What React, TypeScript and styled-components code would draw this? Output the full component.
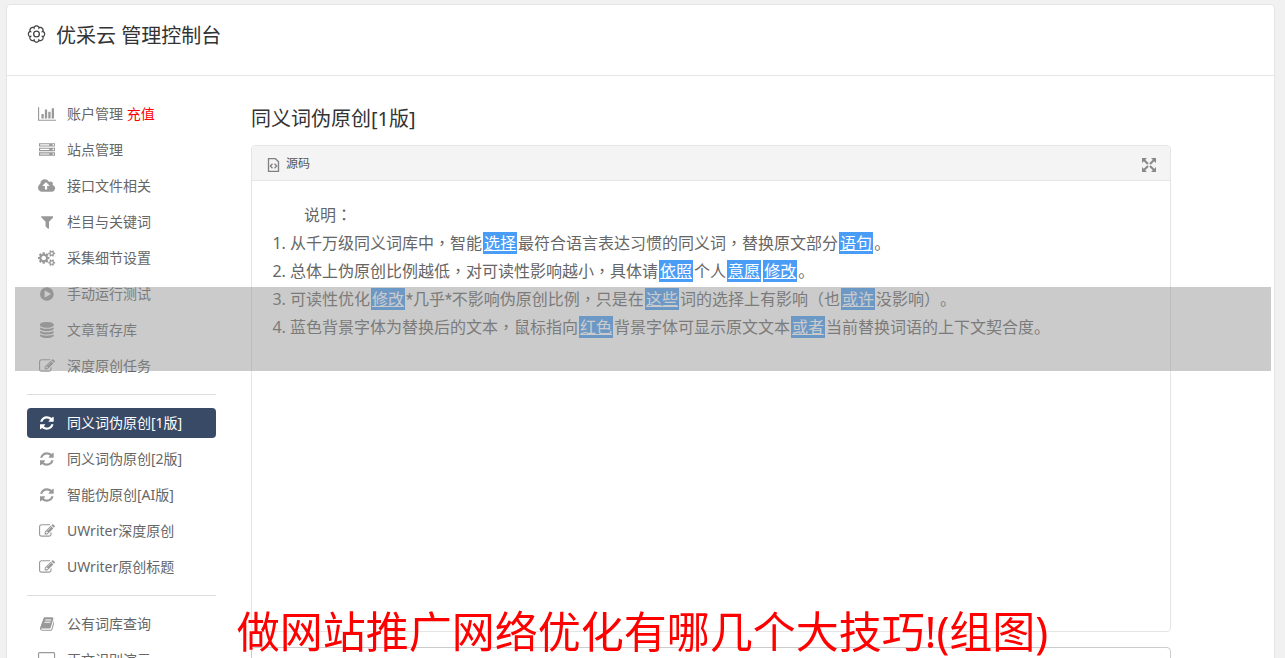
import React from "react";
import styled, { createGlobalStyle } from "styled-components";

const latin = '"Noto Sans", "Noto Sans CJK SC", sans-serif';

const GlobalStyle = createGlobalStyle`
  *, *::before, *::after { box-sizing: border-box; }
  body {
    margin: 0;
    height: 100vh;
    overflow: hidden;
    background: #f1f1f1;
    color: #666;
    font: 14px/20px ${latin};
  }
`;

const Card = styled.div`
  margin: 4px 10px 0 6px;
  min-height: 100vh;
  background: #fff;
  border: 1px solid #e5e5e5;
  border-radius: 4px 4px 0 0;
`;

const TopBar = styled.header`
  display: flex;
  align-items: flex-start;
  gap: 10px;
  height: 71px;
  padding: 16px 20px;
  border-bottom: 1px solid #e5e5e5;
  color: #333;
`;

const GearIcon = styled.svg`
  width: 19px;
  height: 20px;
  margin-top: 3px;
  fill: none;
  stroke: #444;
  stroke-width: 1.4;
`;

const Title = styled.h1`
  margin: 0;
  font-size: 20px;
  line-height: 30px;
  font-weight: 400;
`;

const Columns = styled.div`
  display: flex;
  align-items: flex-start;
  gap: 35px;
  padding: 23px 103px 0 20px;
`;

const Sidebar = styled.nav`
  flex: 0 0 189px;
`;

const Group = styled.ul`
  display: flex;
  flex-direction: column;
  gap: 6px;
  margin: 0;
  padding: 0 0 13px;
  list-style: none;

  & + & {
    padding-top: 13px;
    border-top: 1px solid #ddd;
  }
`;

const ItemLink = styled.a<{ $active?: boolean }>`
  display: flex;
  align-items: center;
  gap: 10px;
  height: 30px;
  padding: 0 10px;
  border-radius: 4px;
  color: ${(p) => (p.$active ? "#fff" : "#666")};
  background: ${(p) => (p.$active ? "#394a66" : "transparent")};
  text-decoration: none;
  white-space: nowrap;
`;

const IconCell = styled.span<{ $active?: boolean }>`
  display: flex;
  justify-content: center;
  flex: 0 0 20px;
  color: ${(p) => (p.$active ? "#fff" : "#999")};

  svg { height: 16px; fill: currentColor; }
`;

const Hot = styled.span`
  color: #f00;
`;

const Main = styled.main`
  flex: 1 1 0;
  min-width: 0;
`;

const Heading = styled.h2`
  margin: 0 0 11px;
  padding-top: 5px;
  color: #333;
  font-size: 20px;
  line-height: 30px;
  font-weight: 400;
`;

const Editor = styled.section`
  min-height: 487px;
  border: 1px solid #e5e5e5;
  border-radius: 4px;
`;

const ToolBar = styled.div`
  display: flex;
  align-items: center;
  justify-content: space-between;
  height: 35px;
  padding: 2px 13px 0 15px;
  background: #f4f4f4;
  border-bottom: 1px solid #e5e5e5;
  border-radius: 4px 4px 0 0;
`;

const ToolButton = styled.button`
  display: flex;
  align-items: center;
  gap: 6px;
  padding: 0;
  border: 0;
  background: none;
  color: #555;
  font: 12px/18px ${latin};

  svg { margin-top: 2px; }
`;

const Content = styled.div`
  padding: 20px;
  font-size: 16px;
  line-height: 28px;
  text-spacing-trim: space-all;
`;

const Intro = styled.p`
  margin: 0;
  text-indent: 32px;
`;

const Rules = styled.ol`
  margin: 0;
  padding: 0 0 0 18px;
  white-space: nowrap;
`;

const Swap = styled.a`
  margin: 0 1px;
  padding: 0 1px;
  background: #4a9df6;
  color: #fff;
  text-decoration: underline;
`;

const Middle = styled.span`
  font-family: "Noto Sans CJK TC", sans-serif;
  line-height: 16px;
`;

const Star = styled.span`
  font-family: Roboto, sans-serif;
  line-height: 16px;
`;

const TextArea = styled.textarea`
  display: block;
  width: 100%;
  height: 80px;
  margin-top: 15px;
  border: 1px solid #ccc;
  border-radius: 4px;
  background: #fff;
  resize: none;
`;

const Band = styled.div`
  position: fixed;
  top: calc(50% - 42px);
  left: 15px;
  right: 14px;
  height: 84px;
  background: rgba(147, 147, 147, 0.48);
`;

const Caption = styled.div`
  position: fixed;
  left: 0;
  right: 0;
  bottom: 0;
  color: #f00;
  font-size: 43px;
  line-height: 52px;
  text-align: center;
  white-space: nowrap;
`;

const smallGear =
  "q0 16-149 31-12 27-30 52 51 113 51 138 0 4-4 7-122 71-124 71-8 0-46-47t-52-68q-20 2-30 2t-30-2q-14 21-52 68t-46 47q-2 0-124-71-4-3-4-7 0-25 51-138-18-25-30-52-149-15-149-31v-140q0-16 149-31 13-29 30-52-51-113-51-138 0-4 4-7 4-2 35-20t59-34 30-16q8 0 46 46.500t52 67.500q20-2 30-2t30 2q51-71 92-112l6-2q4 0 124 70 4 3 4 7 0 25-51 138 17 23 30 52 149 15 149 31z";

const icons = {
  chart: [2048, "M640 896v512h-256v-512h256zm384-512v1024h-256v-1024h256zm1024 1152v128h-2048v-1536h128v1408h1920zm-640-896v768h-256v-768h256zm384-384v1152h-256v-1152h256z"],
  server: [1792, "M128 1408h1024v-128h-1024v128zm0-512h1024v-128h-1024v128zm1568 448q0-40-28-68t-68-28-68 28-28 68 28 68 68 28 68-28 28-68zm-1568-960h1024v-128h-1024v128zm1568 448q0-40-28-68t-68-28-68 28-28 68 28 68 68 28 68-28 28-68zm0-512q0-40-28-68t-68-28-68 28-28 68 28 68 68 28 68-28 28-68zm96 832v384h-1792v-384h1792zm0-512v384h-1792v-384h1792zm0-512v384h-1792v-384h1792z"],
  upload: [1920, "M1280 864q0-14-9-23l-352-352q-9-9-23-9t-23 9l-351 351q-10 12-10 24 0 14 9 23t23 9h224v352q0 13 9.500 22.500t22.500 9.500h192q13 0 22.500-9.500t9.500-22.500v-352h224q13 0 22.500-9.500t9.500-22.500zm640 288q0 159-112.500 271.500t-271.500 112.500h-1088q-185 0-316.500-131.500t-131.500-316.500q0-130 70-240t188-165q-2-30-2-43 0-212 150-362t362-150q156 0 285.500 87t188.500 231q71-62 166-62 106 0 181 75t75 181q0 76-41 138 130 31 213.500 135.500t83.500 238.500z"],
  filter: [1408, "M1403 295q17 41-14 70l-493 493v742q0 42-39 59-13 5-25 5-27 0-45-19l-256-256q-19-19-19-45v-486l-493-493q-31-29-14-70 17-39 59-39h1280q42 0 59 39z"],
  gears: [1920, "M896 896q0-106-75-181t-181-75-181 75-75 181 75 181 181 75 181-75 75-181zm768 512q0-52-38-90t-90-38-90 38-38 90q0 53 37.500 90.500t90.500 37.500 90.500-37.500 37.500-90.500zm0-1024q0-52-38-90t-90-38-90 38-38 90q0 53 37.500 90.500t90.500 37.500 90.500-37.500 37.500-90.500zm-384 421v185q0 10-7 19.500t-16 10.500l-155 24q-11 35-32 76 34 48 90 115 7 11 7 20 0 12-7 19-23 30-82.500 89.500t-78.500 59.500q-11 0-21-7l-115-90q-37 19-77 31-11 108-23 155-7 24-30 24h-186q-11 0-20-7.500t-10-17.500l-23-153q-34-10-75-31l-118 89q-7 7-20 7-11 0-21-8-144-133-144-160 0-9 7-19 10-14 41-53t47-61q-23-44-35-82l-152-24q-10-1-17-9.500t-7-19.500v-185q0-10 7-19.500t16-10.500l155-24q11-35 32-76-34-48-90-115-7-11-7-20 0-12 7-20 22-30 82-89t79-59q11 0 21 7l115 90q34-18 77-32 11-108 23-154 7-24 30-24h186q11 0 20 7.500t10 17.500l23 153q34 10 75 31l118-89q8-7 20-7 11 0 21 8 144 133 144 160 0 8-7 19-12 16-42 54t-45 60q23 48 34 82l152 23q10 2 17 10.500t7 19.500zM1920 1338v140" + smallGear + "M1920 314v140" + smallGear],
  play: [1536, "M768 128a768 768 0 1 0 0 1536a768 768 0 1 0 0-1536zM1152 951l-544 320q-15 9-32 9-16 0-32-8-32-19-32-56v-640q0-37 32-56 33-18 64 1l544 320q32 18 32 55t-32 55z"],
  database: [1536, "M768 768q237 0 443-43t325-127v170q0 69-103 128t-280 93.500-385 34.500-385-34.500-280-93.500-103-128v-170q119 84 325 127t443 43zm0 768q237 0 443-43t325-127v170q0 69-103 128t-280 93.500-385 34.500-385-34.500-280-93.500-103-128v-170q119 84 325 127t443 43zm0-384q237 0 443-43t325-127v170q0 69-103 128t-280 93.500-385 34.500-385-34.500-280-93.500-103-128v-170q119 84 325 127t443 43zm0-1152q208 0 385 34.500t280 93.500 103 128v128q0 69-103 128t-280 93.500-385 34.500-385-34.500-280-93.500-103-128v-128q0-69 103-128t280-93.500 385-34.500z"],
  edit: [1792, "M888 1184l116-116-152-152-116 116v56h96v96h56zm440-720q-16-16-33 1l-350 350q-17 17-1 33t33-1l350-350q17-17 1-33zm80 594v190q0 119-84.500 203.500t-203.500 84.500h-832q-119 0-203.500-84.500t-84.500-203.500v-832q0-119 84.500-203.500t203.500-84.500h832q63 0 117 25 15 7 18 23 3 17-9 29l-49 49q-14 14-32 8-23-6-45-6h-832q-66 0-113 47t-47 113v832q0 66 47 113t113 47h832q66 0 113-47t47-113v-126q0-13 9-22l64-64q15-15 35-7t20 29zm-96-738l288 288-672 672h-288v-288zm444 132l-92 92-288-288 92-92q28-28 68-28t68 28l152 152q28 28 28 68t-28 68z"],
  refresh: [1536, "M1511 1056q0 5-1 7-64 268-268 434.500t-478 166.500q-146 0-282.500-55t-243.500-157l-129 129q-19 19-45 19t-45-19-19-45v-448q0-26 19-45t45-19h448q26 0 45 19t19 45-19 45l-137 137q71 66 161 102t187 36q134 0 250-65t186-179q11-17 53-117 8-23 30-23h192q13 0 22.500 9.500t9.500 22.500zm25-800v448q0 26-19 45t-45 19h-448q-26 0-45-19t-19-45 19-45l138-138q-148-137-349-137-134 0-250 65t-186 179q-11 17-53 117-8 23-30 23h-199q-13 0-22.500-9.500t-9.500-22.500v-7q65-268 270-434.500t480-166.500q146 0 284 55.500t245 156.500l130-129q19-19 45-19t45 19 19 45z"],
  book: [1664, "M1639 478q40 57 18 129l-275 906q-19 64-76.500 107.500t-122.500 43.500h-923q-77 0-148.500-53.500t-99.500-131.500q-24-67-2-127 0-4 3-27t4-37q1-8-3-21.500t-3-19.500q2-11 8-21t16.500-23.500 16.500-23.500q23-38 45-91.500t30-91.500q3-10 .5-30t-.5-28q3-11 17-28t17-23q21-36 42-92t25-90q1-9-2.500-32t.5-28q4-13 22-30.500t22-22.500q19-26 42.500-84.500t27.500-96.500q1-8-3-25.500t-2-26.500q2-8 9-18t18-23 17-21q8-12 16.500-30.500t15-35 16-36 19.500-32 26.500-23.500 36-11.500 47.500 5.500l-1 3q38-9 51-9h761q74 0 114 56t18 130l-274 906q-36 119-71.500 153.500t-128.500 34.500h-869q-27 0-38 15-11 16-1 43 24 70 144 70h923q29 0 56-15.500t35-41.500l300-987q7-22 5-57 38 15 59 43zm-1064 2q-4 13 2 22.500t20 9.500h608q13 0 25.500-9.500t16.500-22.500l21-64q4-13-2-22.500t-20-9.500h-608q-13 0-25.500 9.500t-16.500 22.500zm-83 256q-4 13 2 22.500t20 9.500h608q13 0 25.500-9.500t16.500-22.500l21-64q4-13-2-22.500t-20-9.500h-608q-13 0-25.500 9.500t-16.500 22.500z"],
  desktop: [1920, "M1792 992v-832q0-13-9.500-22.500t-22.500-9.500h-1600q-13 0-22.500 9.500t-9.500 22.500v832q0 13 9.500 22.500t22.500 9.500h1600q13 0 22.500-9.500t9.500-22.500zm128-832v1088q0 66-47 113t-113 47h-544q0 37 16 77.500t32 71 16 43.500q0 26-19 45t-45 19h-512q-26 0-45-19t-19-45q0-14 16-44t32-70 16-78h-544q-66 0-113-47t-47-113v-1088q0-66 47-113t113-47h1600q66 0 113 47t47 113z"],
} as const;

type IconName = keyof typeof icons;

const Glyph = ({ name }: { name: IconName }) => (
  <svg viewBox={`0 0 ${icons[name][0]} 1792`} aria-hidden="true">
    <path fillRule="evenodd" d={icons[name][1]} />
  </svg>
);

type Item = { icon: IconName; label: string; hot?: string; active?: boolean };

const groups: Item[][] = [
  [
    { icon: "chart", label: "账户管理", hot: "充值" },
    { icon: "server", label: "站点管理" },
    { icon: "upload", label: "接口文件相关" },
    { icon: "filter", label: "栏目与关键词" },
    { icon: "gears", label: "采集细节设置" },
    { icon: "play", label: "手动运行测试" },
    { icon: "database", label: "文章暂存库" },
    { icon: "edit", label: "深度原创任务" },
  ],
  [
    { icon: "refresh", label: "同义词伪原创[1版]", active: true },
    { icon: "refresh", label: "同义词伪原创[2版]" },
    { icon: "refresh", label: "智能伪原创[AI版]" },
    { icon: "edit", label: "UWriter深度原创" },
    { icon: "edit", label: "UWriter原创标题" },
  ],
  [
    { icon: "book", label: "公有词库查询" },
    { icon: "desktop", label: "正文识别演示" },
  ],
];

// Words in square brackets are the replaced ones.
const rules = [
  "从千万级同义词库中，智能[选择]最符合语言表达习惯的同义词，替换原文部分[语句]。",
  "总体上伪原创比例越低，对可读性影响越小，具体请[依照]个人[意愿][修改]。",
  "可读性优化[修改]*几乎*不影响伪原创比例，只是在[这些]词的选择上有影响（也[或许]没影响）。",
  "蓝色背景字体为替换后的文本，鼠标指向[红色]背景字体可显示原文文本[或者]当前替换词语的上下文契合度。",
];

const RichText = ({ text }: { text: string }) => (
  <>
    {text.split(/(\[[^\]]+\]|[，：*])/).map((part, i) => {
      if (part.startsWith("[")) return <Swap key={i} href="#">{part.slice(1, -1)}</Swap>;
      if (part === "，" || part === "：") return <Middle key={i} lang="zh-TW">{part}</Middle>;
      if (part === "*") return <Star key={i}>{part}</Star>;
      return part;
    })}
  </>
);

const gearPath = (() => {
  const teeth = 8;
  const points: string[] = [];
  for (let i = 0; i <= 144; i++) {
    const a = (i / 144) * Math.PI * 2;
    // Rounded lobes that meet in narrow dents.
    const r = 6.8 + 1.7 * Math.sqrt(Math.abs(Math.cos((teeth * a) / 2)));
    points.push(`${(10 + r * Math.sin(a)).toFixed(2)} ${(10 - r * Math.cos(a)).toFixed(2)}`);
  }
  return `M${points.join("L")}Z`;
})();

export default function App() {
  return (
    <>
      <GlobalStyle />
      <Card>
        <TopBar>
          <GearIcon viewBox="0 0 20 20" aria-hidden="true">
            <path d={gearPath} />
            <circle cx="10" cy="10" r="3" />
          </GearIcon>
          <Title>优采云 管理控制台</Title>
        </TopBar>
        <Columns>
          <Sidebar>
            {groups.map((items, g) => (
              <Group key={g}>
                {items.map((item) => (
                  <li key={item.label}>
                    <ItemLink href="#" $active={item.active}>
                      <IconCell $active={item.active}>
                        <Glyph name={item.icon} />
                      </IconCell>
                      <span>
                        {item.label}
                        {item.hot && <Hot> {item.hot}</Hot>}
                      </span>
                    </ItemLink>
                  </li>
                ))}
              </Group>
            ))}
          </Sidebar>
          <Main>
            <Heading>同义词伪原创[1版]</Heading>
            <Editor>
              <ToolBar>
                <ToolButton type="button">
                  <svg width="13" height="14" viewBox="0 0 13 14" fill="none" stroke="#808080" strokeWidth="1.3" aria-hidden="true">
                    <path d="M1.500 .7H8.500L11.500 3.700V13.300H1.500Z" />
                    <path d="M5.500 5.700L3.300 8L5.500 10.300M7.500 5.700L9.700 8L7.500 10.300" />
                  </svg>
                  源码
                </ToolButton>
                <ToolButton type="button" aria-label="全屏">
                  <svg width="16" height="16" viewBox="0 0 16 16" fill="#888" stroke="#888" strokeWidth="2" aria-hidden="true">
                    <path stroke="none" d="M1 1h5L1 6zM15 1v5L10 1zM1 15v-5l5 5zM15 15h-5l5-5z" />
                    <path d="M3 3l4 4M13 3L9 7M3 13l4-4M13 13L9 9" />
                  </svg>
                </ToolButton>
              </ToolBar>
              <Content>
                <Intro><RichText text="说明：" /></Intro>
                <Rules>
                  {rules.map((rule) => (
                    <li key={rule}><RichText text={rule} /></li>
                  ))}
                </Rules>
              </Content>
            </Editor>
            <TextArea aria-label="原文" />
          </Main>
        </Columns>
      </Card>
      <Band />
      <Caption>做网站推广网络优化有哪几个大技巧!(组图)</Caption>
    </>
  );
}
